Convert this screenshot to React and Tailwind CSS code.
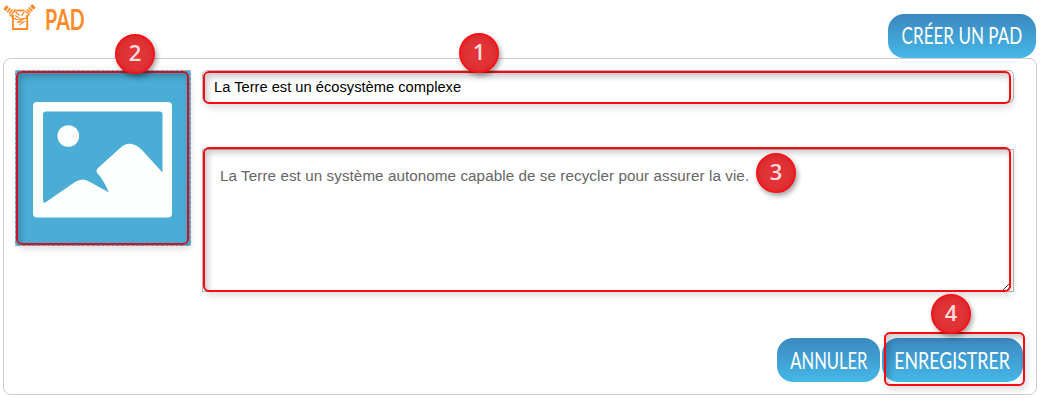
const display = 'font-["Lato",sans-serif] whitespace-nowrap inline-block origin-center';

function PadIcon() {
  return (
    <svg className="block h-[28px] w-[34px]" viewBox="3 3 34 28" fill="none" stroke="#ff8a27" aria-hidden="true">
      <path d="M12.900 15V29H27.200V15" strokeWidth="1.900" />
      <path d="M13.500 10.500H24.500" strokeWidth="1.800" />
      <path d="M4.800 7.300L13.500 13.500" strokeWidth="5" strokeDasharray="3 1 1.800 1 1.500 1 3" />
      <path d="M34 5.800L26.500 13.200" strokeWidth="5" strokeDasharray="3 1 1.800 1 1.500 1 3" />
      <path d="M9.500 14.500L13.500 18.500L16 19M15.500 12L19.500 15.500" strokeWidth="1.300" />
      <path d="M29.500 14L25 18.500L22 19.500M24.500 11.500L21.500 16" strokeWidth="1.300" />
      <path d="M15 15.500L20 18.500M16 19.500L24 18.500L17 22.500L24 21.800L19.500 25" strokeWidth="1.100" />
    </svg>
  );
}

function Button({ className, textClass, children }) {
  return (
    <button className={`flex h-11 shrink-0 items-center justify-center rounded-[16px] bg-linear-to-b from-[#3b88c0] to-[#45b8e7] text-white ${className}`}>
      <span className={`${display} text-[24px] leading-none ${textClass}`}>{children}</span>
    </button>
  );
}

function Outline({ className, tone = "border-[#f60b10]" }) {
  return (
    <div className={`pointer-events-none absolute rounded-[6px] border-2 shadow-[2px_4px_7px_rgba(0,0,0,0.13),inset_3px_4px_6px_rgba(0,0,0,0.2)] ${tone} ${className}`} />
  );
}

function Badge({ className, children }) {
  return (
    <div className={`absolute flex size-10 items-center justify-center rounded-full border-2 border-[#fa1216] bg-[#e23337] pb-1 font-["Open_Sans",sans-serif] text-[22px] leading-none font-semibold text-[#ffdcdc] shadow-[2px_3px_5px_rgba(0,0,0,0.35),inset_0_1px_6px_rgba(170,20,20,0.35)] ${className}`}>
      {children}
    </div>
  );
}

function Thumbnail() {
  return (
    <div className="relative size-44 shrink-0 border border-dashed border-[#bbb] bg-[#4aadd6]">
      <svg className="block size-full" viewBox="16 71 174 174" aria-hidden="true">
        <rect x="33" y="102" width="139" height="115.5" rx="4" fill="#fdfefe" />
        <path d="M46 111.5H159.500Q162.500 111.500 162.500 114.500V172.500L142 150Q130 138 119 149L98 168Q95 171 98 174Q103 179 109 192.500L90 182Q83 177 75 182L46 202Q43 204 43 200V114.500Q43 111.500 46 111.500Z" fill="#4aadd6" />
        <circle cx="68.300" cy="136" r="10.800" fill="#fdfefe" />
      </svg>
      <Outline className="top-0 left-0 h-[174px] w-[173px]" tone="border-[#d01226]" />
      <Badge className="-top-[37px] left-[99px]">2</Badge>
    </div>
  );
}

export default function App() {
  return (
    <main className="h-[414px] w-[1043px] overflow-hidden bg-white pl-[3px]">
      <header className="flex h-[58px] w-[1033px] items-end justify-between">
        <div className="flex h-full items-start gap-[8px] pt-[3px]">
          <PadIcon />
          <h1 className={`${display} mt-0.5 origin-left scale-x-70 text-[28px] leading-none font-bold text-[#ff8a27]`}>PAD</h1>
        </div>
        <Button className="w-[148px] pb-0.5" textClass="scale-x-71">CRÉER UN PAD</Button>
      </header>
      <section className="flex h-[337px] w-[1034px] gap-[11px] rounded-[8px] border border-[#ccc] pt-[11px] pl-[11px]">
        <Thumbnail />
        <div className="flex w-[821px] flex-col">
          <div className="relative h-[33px] w-[812px]">
            <div className="flex size-full items-center rounded-[5px] border border-[#bbb] pt-0.5 pl-[11px] font-['Liberation_Sans',Arial,sans-serif] text-[14.7px] text-black">
              <span>La Terre est un écosystème complexe</span>
            </div>
            <Outline className="top-px left-px h-[33px] w-[808px]" />
            <Badge className="-top-[37px] left-[257px]">1</Badge>
          </div>
          <div className="relative mt-[46px] h-[143px] w-[812px]">
            <div className="size-full border border-[#bbb] pt-[16px] pl-[17px] font-['Liberation_Sans',Arial,sans-serif] text-[15.2px] leading-5 tracking-[0.08px] text-[#666]">
              <span>La Terre est un système autonome capable de se recycler pour assurer la vie.</span>
            </div>
            <svg className="absolute right-[3px] bottom-[2px] size-2" viewBox="0 0 8 8" stroke="#444" aria-hidden="true">
              <path d="M0 8L8 0M4.500 8L8 4.500" />
            </svg>
            <Outline className="-top-[2px] left-px h-[145px] w-[808px]" />
            <Badge className="top-[4px] left-[554px]">3</Badge>
          </div>
          <div className="relative mt-[46px] flex justify-end gap-0.5">
            <Button className="w-[103px]" textClass="scale-x-69">ANNULER</Button>
            <Button className="w-[141px]" textClass="scale-x-74">ENREGISTRER</Button>
            <Outline className="-top-[6px] left-[682px] h-[54px] w-[141px]" />
            <Badge className="-top-[44px] left-[729px]">4</Badge>
          </div>
        </div>
      </section>
    </main>
  );
}
